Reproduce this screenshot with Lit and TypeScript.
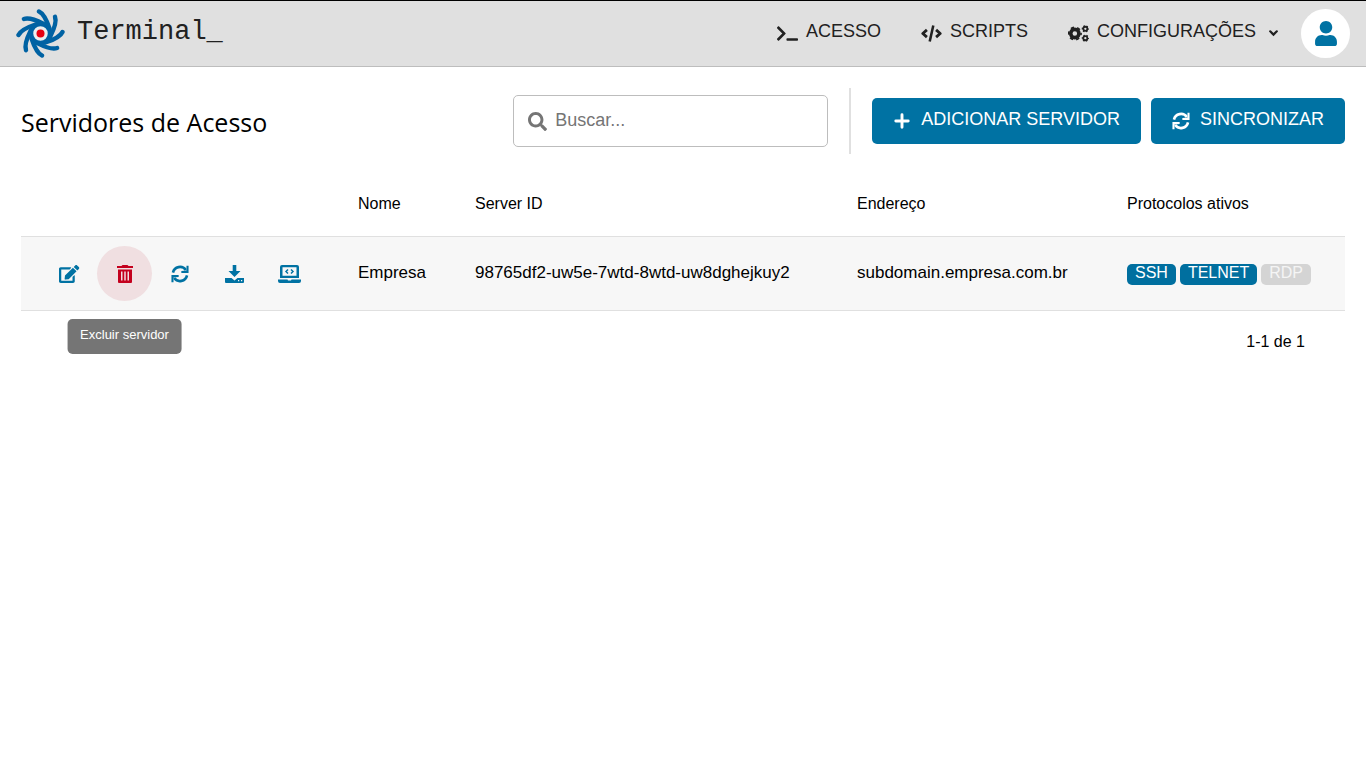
import { LitElement, html, svg, css } from "lit";
import { customElement, property, state } from "lit/decorators.js";
import { classMap } from "lit/directives/class-map.js";

const ICONS: Record<string, { box: string; body: unknown }> = {
  terminal: {
    box: "0 0 640 512",
    body: svg`<path d="M257.981 272.971L63.638 467.314c-9.373 9.373-24.569 9.373-33.941 0L7.029 444.647c-9.357-9.357-9.375-24.522-.04-33.901L161.011 256 6.99 101.255c-9.335-9.379-9.317-24.544.04-33.901l22.667-22.667c9.373-9.373 24.569-9.373 33.941 0L257.981 239.03c9.373 9.372 9.373 24.568 0 33.941zM640 456v-32c0-13.255-10.745-24-24-24H312c-13.255 0-24 10.745-24 24v32c0 13.255 10.745 24 24 24h304c13.255 0 24-10.745 24-24z"/>`,
  },
  code: {
    box: "0 0 640 512",
    body: svg`<g fill="none" stroke="currentColor" stroke-width="86" stroke-linejoin="round"><path d="M180 145 55 256l125 111M460 145l125 111-125 111"/><path d="M375 10 265 502" stroke-width="78"/></g>`,
  },
  gears: {
    box: "0 0 640 512",
    body: svg`<g fill="none" stroke="currentColor"><circle cx="208" cy="256" r="125" stroke-width="110"/><circle cx="208" cy="256" r="190" stroke-width="50" stroke-dasharray="99.5" stroke-dashoffset="50"/><circle cx="528" cy="112" r="62" stroke-width="54"/><circle cx="528" cy="112" r="92" stroke-width="36" stroke-dasharray="48.2" stroke-dashoffset="24"/><circle cx="528" cy="400" r="62" stroke-width="54"/><circle cx="528" cy="400" r="92" stroke-width="36" stroke-dasharray="48.2" stroke-dashoffset="24"/></g>`,
  },
  chevron: {
    box: "0 0 10 10",
    body: svg`<path d="M2 3l3 3 3-3" fill="none" stroke="currentColor" stroke-width="2" stroke-linecap="round"/>`,
  },
  user: {
    box: "0 0 448 512",
    body: svg`<path d="M224 256c70.7 0 128-57.3 128-128S294.7 0 224 0 96 57.3 96 128s57.3 128 128 128zm89.6 32h-16.7c-22.2 10.2-46.9 16-72.9 16s-50.6-5.800-72.9-16h-16.700C60.200 288 0 348.200 0 422.400v41.600c0 26.500 21.500 48 48 48h352c26.500 0 48-21.500 48-48v-41.600c0-74.200-60.200-134.400-134.400-134.400z"/>`,
  },
  search: {
    box: "0 0 512 512",
    body: svg`<path d="M505 442.7L405.3 343c-4.500-4.500-10.600-7-17-7H372c27.600-35.300 44-79.700 44-128C416 93.100 322.900 0 208 0S0 93.100 0 208s93.100 208 208 208c48.300 0 92.700-16.400 128-44v16.300c0 6.400 2.500 12.500 7 17l99.700 99.700c9.400 9.400 24.600 9.400 33.900 0l28.300-28.300c9.400-9.400 9.400-24.600.1-34zM208 336c-70.700 0-128-57.200-128-128 0-70.700 57.200-128 128-128 70.700 0 128 57.200 128 128 0 70.700-57.200 128-128 128z"/>`,
  },
  plus: {
    box: "0 0 16 16",
    body: svg`<path d="M8 2.500v11M2.500 8h11" fill="none" stroke="currentColor" stroke-width="2.600" stroke-linecap="round"/>`,
  },
  sync: {
    box: "0 0 20 20",
    body: svg`<g fill="none" stroke="currentColor" stroke-width="2.900"><path d="M2.200 8.500A8 8 0 0 1 16.500 5.500"/><path d="M17.800 11.500A8 8 0 0 1 3.500 14.500"/></g><path d="M19.500 .8v8h-8v-2l5.700-.6V.8zM.5 19.200v-8h8v2l-5.700.6v5.400z"/>`,
  },
  edit: {
    box: "0 0 576 512",
    body: svg`<path d="M402.600 83.200l90.200 90.200c3.800 3.800 3.800 10 0 13.800L274.400 405.600l-92.800 10.300c-12.400 1.400-22.900-9.100-21.500-21.500l10.300-92.800L388.800 83.200c3.800-3.800 10-3.800 13.800 0zm162-22.900l-48.800-48.800c-15.200-15.200-39.900-15.200-55.200 0l-35.400 35.400c-3.800 3.800-3.800 10 0 13.800l90.200 90.200c3.800 3.800 10 3.800 13.800 0l35.400-35.400c15.200-15.300 15.200-40 0-55.200zM384 346.200V448H64V128h229.800c3.200 0 6.200-1.300 8.500-3.500l40-40c7.600-7.600 2.200-20.500-8.500-20.500H48C21.500 64 0 85.500 0 112v352c0 26.500 21.500 48 48 48h352c26.500 0 48-21.500 48-48V306.200c0-10.700-12.900-16-20.500-8.500l-40 40c-2.200 2.300-3.500 5.300-3.500 8.500z"/>`,
  },
  trash: {
    box: "0 0 16 18",
    body: svg`<path fill-rule="evenodd" d="M5.500 0h5l1 1H16v2H0V1h4.500zM1 4.500h14V17q0 1-1 1H2q-1 0-1-1zM4 6.500v9h1.500v-9zm3.250 0v9h1.500v-9zm3.250 0v9H12v-9z"/>`,
  },
  download: {
    box: "0 0 19 18",
    body: svg`<path d="M7.700 0h3.600v6h4.200L9.500 12 3.500 6h4.200z"/><path fill-rule="evenodd" d="M0 13h6.500l3 2.500 3-2.500H19v4q0 1-1 1H1q-1 0-1-1zM13 15v1.200h1.200V15zm3 0v1.200h1.200V15z"/>`,
  },
  laptop: {
    box: "0 0 23 18",
    body: svg`<path fill-rule="evenodd" d="M4 0h15q2 0 2 2v11H2V2q0-2 2-2zm.5 2.300v8.400h14V2.300z"/><path d="M0 14.500h9.500l.5 1h3l.5-1H23V16q0 2-2 2H2q-2 0-2-2z"/><path d="M10 4.500 8 6.500l2 2M13 4.500l2 2-2 2" fill="none" stroke="currentColor" stroke-width="1.500"/>`,
  },
};

const icon = (name: string) => html`<svg class="icon icon-${name}" viewBox=${ICONS[name].box} fill="currentColor" aria-hidden="true">${ICONS[name].body}</svg>`;

interface Server {
  name: string;
  id: string;
  address: string;
  protocols: { label: string; on: boolean }[];
}

const ACTIONS = [
  { icon: "edit", label: "Editar servidor" },
  { icon: "trash", label: "Excluir servidor" },
  { icon: "sync", label: "Sincronizar servidor" },
  { icon: "download", label: "Baixar instalador" },
  { icon: "laptop", label: "Abrir console" },
];

@customElement("app-header")
class AppHeader extends LitElement {
  static styles = css`
    :host { display: block; }
    .bar {
      display: flex; align-items: center; box-sizing: border-box; height: 67px; padding: 0 16px;
      background: #e0e0e0; border-top: 1px solid #000; border-bottom: 1px solid #bdbdbd; color: #212121;
    }
    a { color: inherit; text-decoration: none; }
    .brand { display: flex; align-items: center; gap: 12px; font: 27px/36px "Liberation Mono", monospace; }
    .name { padding-bottom: 3px; }
    .logo { width: 49px; height: 49px; display: block; }
    nav { display: flex; gap: 40px; margin-left: auto; }
    .link { display: flex; align-items: center; gap: 8px; font-size: 18px; line-height: 20px; padding: 0 0 3px; }
    .label { padding-bottom: 2px; }
    .icon { width: 21px; height: 17px; margin-top: 3px; }
    .icon-chevron { width: 11px; height: 11px; margin-left: 4px; }
    .avatar {
      display: flex; align-items: center; justify-content: center; width: 49px; height: 49px; padding: 0;
      margin-left: 22px; border: 0; border-radius: 50%; background: #fff; color: #0072a3;
    }
    .icon-user { width: 22px; height: 25px; margin: 0; }
  `;

  render() {
    return html`
      <header class="bar">
        <a class="brand" href="#">
          <svg class="logo" viewBox="-24.500 -24.500 49 49" aria-hidden="true">
            <circle r="9.500" fill="#ebeef0" stroke="#0062a3" stroke-width="4.500"></circle>
            ${[0, 45, 90, 135, 180, 225, 270, 315].map(
              (a) => svg`<path transform="rotate(${a})" d="M-1.500-22C3-20 6-14 9-5" fill="none" stroke="#0062a3" stroke-width="4.400" stroke-linecap="round"/>`
            )}
            <circle r="4" fill="#e60012"></circle>
          </svg>
          <span class="name">Terminal_</span>
        </a>
        <nav>
          <a class="link" href="#acesso">${icon("terminal")}<span class="label">ACESSO</span></a>
          <a class="link" href="#scripts">${icon("code")}<span class="label">SCRIPTS</span></a>
          <a class="link" href="#config">${icon("gears")}<span class="label">CONFIGURAÇÕES</span>${icon("chevron")}</a>
        </nav>
        <button class="avatar" aria-label="Conta">${icon("user")}</button>
      </header>
    `;
  }
}

@customElement("server-table")
class ServerTable extends LitElement {
  @property({ attribute: false }) servers: Server[] = [];
  @state() private active = "trash";

  static styles = css`
    :host { display: block; font-size: 16px; line-height: 20px; }
    table { width: 100%; table-layout: fixed; border-collapse: collapse; }
    th { text-align: left; font-weight: 400; height: 64px; padding: 2px 16px 0; }
    td { height: 71px; padding: 0 16px 2px; background: #f7f7f7; border: solid #e0e0e0; border-width: 1px 0; font-size: 17px; }
    td.tools { padding: 0 0 0 21px; }
    .c-tools { width: 321px; } .c-name { width: 117px; } .c-id { width: 382px; }
    .c-address { width: 270px; } .c-protocols { width: 234px; }
    .actions { display: flex; }
    .slot { position: relative; }
    .action {
      display: flex; align-items: center; justify-content: center; width: 55px; height: 55px; padding: 0;
      border: 0; border-radius: 50%; background: none; color: #0072a3;
    }
    .action.active { background: #f0dfe1; color: #c4001d; }
    .icon { height: 18px; }
    .tip {
      position: absolute; top: 100%; left: 50%; transform: translateX(-50%); margin-top: 18px; z-index: 1;
      padding: 7px 13px 10px; border-radius: 5px; background: #757575; color: #fff;
      font-size: 13px; line-height: 18px; white-space: nowrap;
    }
    .badges { display: flex; gap: 4px; padding-top: 4px; font-size: 16px; }
    .badge { padding: 0 8px 3px; border-radius: 5px; background: #006f9f; color: #fff; line-height: 18px; }
    .badge.off { background: #d4d4d4; color: #f5f5f5; }
    .pager { padding: 21px 40px; text-align: right; }
  `;

  render() {
    return html`
      <table>
        <colgroup>
          <col class="c-tools" /><col class="c-name" /><col class="c-id" /><col class="c-address" /><col class="c-protocols" />
        </colgroup>
        <thead>
          <tr><th></th><th>Nome</th><th>Server ID</th><th>Endereço</th><th>Protocolos ativos</th></tr>
        </thead>
        <tbody>
          ${this.servers.map(
            (s) => html`<tr>
              <td class="tools">
                <div class="actions">
                  ${ACTIONS.map(
                    (a) => html`<div class="slot">
                      <button
                        class=${classMap({ action: true, active: this.active === a.icon })}
                        aria-label=${a.label}
                        @focus=${() => (this.active = a.icon)}
                      >${icon(a.icon)}</button>
                      ${this.active === a.icon ? html`<div class="tip" role="tooltip">${a.label}</div>` : null}
                    </div>`
                  )}
                </div>
              </td>
              <td>${s.name}</td>
              <td>${s.id}</td>
              <td>${s.address}</td>
              <td>
                <div class="badges">
                  ${s.protocols.map((p) => html`<span class=${classMap({ badge: true, off: !p.on })}>${p.label}</span>`)}
                </div>
              </td>
            </tr>`
          )}
        </tbody>
      </table>
      <div class="pager">1-1 de 1</div>
    `;
  }
}

@customElement("app-root")
class AppRoot extends LitElement {
  private servers: Server[] = [
    {
      name: "Empresa",
      id: "98765df2-uw5e-7wtd-8wtd-uw8dghejkuy2",
      address: "subdomain.empresa.com.br",
      protocols: [
        { label: "SSH", on: true },
        { label: "TELNET", on: true },
        { label: "RDP", on: false },
      ],
    },
  ];

  static styles = css`
    :host { display: block; min-height: 100vh; background: #fff; color: #000; font-family: "Liberation Sans", Arial, sans-serif; }
    main { padding: 21px; }
    .toolbar { display: flex; align-items: center; height: 66px; margin-bottom: 16px; }
    h1 { margin: 0; padding-top: 2px; font: 400 25px/36px "Open Sans", sans-serif; }
    .search {
      display: flex; align-items: center; gap: 8px; box-sizing: border-box; width: 315px; height: 52px; margin-left: auto;
      padding: 0 14px; border: 1px solid #bdbdbd; border-radius: 5px; color: #757575;
    }
    .search input {
      flex: 1; min-width: 0; padding: 0 0 2px; border: 0; outline: 0; background: none;
      font: 18px/24px "Liberation Sans", Arial, sans-serif; color: #212121;
    }
    .search input::placeholder { color: #757575; opacity: 1; }
    .icon-search { width: 19px; height: 19px; }
    .divider { width: 2px; height: 66px; margin: 0 21px; background: #e0e0e0; }
    .button {
      display: flex; align-items: center; height: 46px; padding: 0 21px 5px; border: 0; border-radius: 5px;
      background: #0072a3; color: #fff; font: 18px/22px "Liberation Sans", Arial, sans-serif; gap: 10px;
    }
    .button + .button { margin-left: 10px; }
    .button .icon { width: 18px; height: 18px; margin-top: 4px; }
  `;

  render() {
    return html`
      <app-header></app-header>
      <main>
        <div class="toolbar">
          <h1>Servidores de Acesso</h1>
          <label class="search">${icon("search")}<input type="text" placeholder="Buscar..." aria-label="Buscar" /></label>
          <div class="divider"></div>
          <button class="button">${icon("plus")}ADICIONAR SERVIDOR</button>
          <button class="button">${icon("sync")}SINCRONIZAR</button>
        </div>
        <server-table .servers=${this.servers}></server-table>
      </main>
    `;
  }
}
